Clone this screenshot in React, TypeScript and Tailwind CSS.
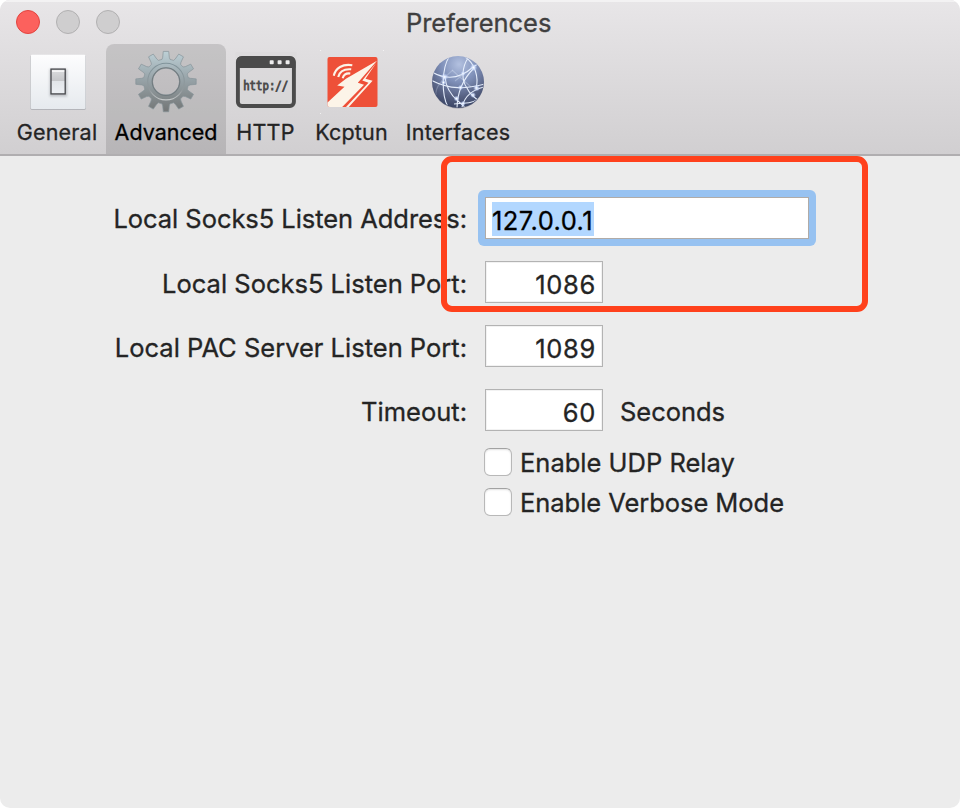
import React from "react";

const gearPath = (() => {
  const teeth = 12;
  const parts: string[] = [];
  const point = (radius: number, angle: number) =>
    `${(32 + radius * Math.sin(angle)).toFixed(2)} ${(32 - radius * Math.cos(angle)).toFixed(2)}`;
  for (let i = 0; i < teeth; i++) {
    const a = (i * 2 * Math.PI) / teeth;
    parts.push(`${i ? "L" : "M"}${point(22.5, a - 0.18)}`);
    parts.push(`L${point(24.5, a - 0.135)}`);
    parts.push(`L${point(30.3, a - 0.09)}`);
    parts.push(`L${point(30.3, a + 0.09)}`);
    parts.push(`L${point(24.5, a + 0.135)}`);
    parts.push(`L${point(22.5, a + 0.18)}`);
    parts.push(`A22.5 22.5 0 0 1 ${point(22.5, a + (2 * Math.PI) / teeth - 0.18)}`);
  }
  return parts.join("") + "Z M45.5 32A13.5 13.5 0 1 0 18.5 32A13.5 13.5 0 1 0 45.5 32Z";
})();

function SwitchIcon() {
  return (
    <svg width="64" height="64" viewBox="0 0 64 64">
      <defs>
        <linearGradient id="plate" x1="0" y1="0" x2="0" y2="1">
          <stop offset="0" stopColor="#fdfdfe" />
          <stop offset="1" stopColor="#e6eaee" />
        </linearGradient>
        <linearGradient id="rocker" x1="0" y1="0" x2="0" y2="1">
          <stop offset="0" stopColor="#dcdddf" />
          <stop offset="0.46" stopColor="#c6c7ca" />
          <stop offset="0.5" stopColor="#e2e5e9" />
          <stop offset="1" stopColor="#edf0f4" />
        </linearGradient>
        <filter id="soft" x="-50%" y="-50%" width="200%" height="200%">
          <feGaussianBlur stdDeviation="1.3" />
        </filter>
      </defs>
      <g transform="translate(0.8 0)">
        <rect x="4.700" y="5" width="55.300" height="54.800" rx="1.500" fill="#a8abb0" />
        <rect x="5" y="4.700" width="54.700" height="54.300" rx="1" fill="url(#plate)" />
        <rect x="23.800" y="19" width="17.500" height="27.500" fill="#777b82" opacity="0.400" filter="url(#soft)" />
        <rect x="25.200" y="19.100" width="14.200" height="24.800" fill="url(#rocker)" stroke="#47484c" strokeWidth="1.300" />
        <rect x="26.200" y="20.200" width="12.200" height="1.800" fill="#f4f4f5" />
      </g>
    </svg>
  );
}

function GearIcon() {
  return (
    <svg width="64" height="64" viewBox="0 0 64 64">
      <defs>
        <linearGradient id="gear" x1="0" y1="0" x2="0" y2="1">
          <stop offset="0" stopColor="#bdd0d6" />
          <stop offset="0.45" stopColor="#98a4a9" />
          <stop offset="1" stopColor="#737676" />
        </linearGradient>
        <linearGradient id="gearRing" x1="0" y1="0" x2="0" y2="1">
          <stop offset="0" stopColor="#81949b" />
          <stop offset="0.75" stopColor="#92999c" />
          <stop offset="1" stopColor="#c6c9ca" />
        </linearGradient>
      </defs>
      <g transform="translate(0 -0.4)">
        <path d={gearPath} fill="url(#gear)" stroke="#87949a" strokeWidth="0.700" strokeLinejoin="round" fillRule="evenodd" />
        <circle cx="32" cy="32" r="18.300" fill="none" stroke="url(#gearRing)" strokeWidth="1.100" />
        <circle cx="32" cy="32" r="13.800" fill="none" stroke="#727b7f" strokeWidth="1.100" />
      </g>
    </svg>
  );
}

function HttpIcon() {
  return (
    <svg width="64" height="64" viewBox="0 0 64 64">
      <rect x="1.500" y="2" width="61" height="60" fill="#d8d7d8" opacity="0.350" />
      <g transform="translate(-0.6 0)">
        <rect x="4.500" y="8" width="56" height="48" rx="4" fill="none" stroke="#4b4b4b" strokeWidth="3.900" />
        <path d="M3 18V12Q3 6.500 8 6.500H57Q62 6.500 62 12V18Z" fill="#4b4b4b" />
        <g fill="#eeeeee">
          <rect x="36.300" y="10.300" width="4" height="4" rx="0.800" />
          <rect x="44.200" y="10.300" width="4" height="4" rx="0.800" />
          <rect x="52.200" y="10.300" width="4" height="4" rx="0.800" />
        </g>
        <text
          x="9.800"
          y="39.500"
          fill="#4b4b4b"
          stroke="#4b4b4b"
          strokeWidth="0.900"
          textLength="45"
          lengthAdjust="spacingAndGlyphs"
          className="font-['DejaVu_Sans_Mono',monospace] text-[13px]"
        >
          http://
        </text>
      </g>
    </svg>
  );
}

function KcptunIcon() {
  return (
    <svg width="64" height="64" viewBox="0 0 64 64">
      <g fill="#f4f3f4">
        <circle cx="0.500" cy="0.500" r="0.600" />
        <circle cx="63.500" cy="0.500" r="0.600" />
        <circle cx="0.500" cy="63.500" r="0.600" />
      </g>
      <rect x="7.500" y="7" width="50" height="50" rx="2" fill="#ee5038" />
      <g fill="none" stroke="#fcf4e8" strokeWidth="2.100">
        <path d="M13.800 25.800C15.500 18 22.500 13.600 32.300 15.200" />
        <path d="M18.200 27C19.500 21.700 24 18.700 31.200 19.300" />
        <path d="M22.700 28.300C23.500 25 26 23 30.300 23.500" />
      </g>
      <path d="M57 10.800L26.300 28.500L17.200 35.500L24.500 36.700L7.500 52.500V55Q7.500 57 9.500 57H22.200L44 34.800L37.800 32.700Z" fill="#fcf4e8" />
      <path d="M56.300 12.800L45.500 28.800L52.600 30.800L28.800 57H26L48.500 32.700L42.300 30.600Z" fill="#fcf4e8" />
    </svg>
  );
}

function GlobeIcon() {
  return (
    <svg width="64" height="64" viewBox="0 0 64 64">
      <defs>
        <radialGradient id="globe" cx="0.520" cy="0.160" r="0.850">
          <stop offset="0" stopColor="#b3c1e0" />
          <stop offset="0.400" stopColor="#7f90b9" />
          <stop offset="0.750" stopColor="#555f80" />
          <stop offset="1" stopColor="#394464" />
        </radialGradient>
        <radialGradient id="glow">
          <stop offset="0" stopColor="#ffffff" />
          <stop offset="0.350" stopColor="#dce8ff" stopOpacity="0.850" />
          <stop offset="1" stopColor="#b6cbff" stopOpacity="0" />
        </radialGradient>
        <clipPath id="globeClip">
          <circle cx="32" cy="32" r="25.500" />
        </clipPath>
      </defs>
      <ellipse cx="32" cy="33" rx="25.700" ry="25.700" fill="#8c8c97" opacity="0.500" />
      <circle cx="32" cy="32" r="26" fill="url(#globe)" />
      <g clipPath="url(#globeClip)" fill="none" stroke="#e5edfb" strokeWidth="1.100">
        <path d="M23 7C16 18 15 44 22 57" />
        <path d="M6 22C20 30 34 29 47 17L55 12" />
        <path d="M5 30C24 40 40 39 59 34" />
        <path d="M42 8C36 17 35 30 41 38C44 45 50 49 55 52" />
        <path d="M19 27C20 38 26 46 32 51L41 59" />
        <path d="M48 18C38 28 31 42 31 59" />
        <path d="M39 7C49 13 53 28 50 38" />
        <path d="M36 57C39 45 47 40 58 37" />
        <path d="M28 54C37 53 48 54 54 47" />
        <path d="M10 45C9 38 16 29 27 20" strokeOpacity="0.250" />
        <path d="M26 20L45 37M29 31L39 23" strokeOpacity="0.300" />
      </g>
      <g fill="url(#glow)">
        <circle cx="18.500" cy="27" r="3.800" />
        <circle cx="17.500" cy="32.500" r="2.700" />
        <circle cx="47.500" cy="17.500" r="3.800" />
        <circle cx="37" cy="23.500" r="2.500" />
        <circle cx="34.500" cy="37.500" r="2.800" />
        <circle cx="50.500" cy="38" r="3.500" />
        <circle cx="47" cy="45" r="3" />
        <circle cx="30.500" cy="48.500" r="3" />
        <circle cx="37" cy="53.500" r="2.700" />
      </g>
    </svg>
  );
}

const tabs = [
  { label: "General", icon: <SwitchIcon />, width: "w-[98px]", tracking: "tracking-[0.2px]" },
  { label: "Advanced", icon: <GearIcon />, width: "w-[120px]", tracking: "tracking-[0px]", active: true },
  { label: "HTTP", icon: <HttpIcon />, width: "w-[79px]", tracking: "tracking-[0.2px]" },
  { label: "Kcptun", icon: <KcptunIcon />, width: "w-[93px]", tracking: "tracking-[0.2px]" },
  { label: "Interfaces", icon: <GlobeIcon />, width: "w-[120px]", tracking: "tracking-[0.25px]" },
];

function Row({ label, tracking, top, children }: { label: string; tracking: string; top: string; children: React.ReactNode }) {
  return (
    <div className="flex h-16 items-center">
      <label className={`w-[467px] shrink-0 text-right whitespace-nowrap ${top} ${tracking}`}>{label}</label>
      {children}
    </div>
  );
}

function NumberField({ value }: { value: string }) {
  return (
    <div className="ml-[18px] flex h-[42px] w-[118px] items-center justify-end border border-[#b3b3b3] bg-white pt-[5px] pr-[6px] tracking-[0.7px] shadow-[inset_0_0_0_1px_#f2f2f2]">
      {value}
    </div>
  );
}

function Checkbox({ label, tracking }: { label: string; tracking: string }) {
  return (
    <div className="ml-[484px] flex h-10 items-center gap-2">
      <span className="h-7 w-7 shrink-0 rounded-[6px] border border-[#b8b8b8] border-t-[#a2a2a2] bg-white shadow-[inset_0_1px_2px_#e2e2e2]" />
      <span className={`pt-[2px] whitespace-nowrap ${tracking}`}>{label}</span>
    </div>
  );
}

export default function App() {
  return (
    <div className="h-[808px] w-[960px] bg-white font-[Inter,sans-serif] text-[25.5px] leading-8 text-[#242424] [-webkit-text-stroke-width:0.3px]">
      <div className="relative h-full overflow-hidden rounded-[10px] bg-[#ececec]">
        <header className="h-[156px] border-b-2 border-[#b0aeb0] bg-linear-to-b from-[#e8e6e8] to-[#d1cfd1] shadow-[inset_0_2px_0_#f3f2f3]">
          <div className="flex h-11 items-center">
            <div className="flex w-[120px] gap-4 pl-4">
              <span className="h-6 w-6 rounded-full border border-[#e2443f] bg-[#fc615d]" />
              <span className="h-6 w-6 rounded-full border border-[#b1b0b1] bg-[#cfcecf]" />
              <span className="h-6 w-6 rounded-full border border-[#b1b0b1] bg-[#cfcecf]" />
            </div>
            <h1 className="ml-[286px] pt-[2px] tracking-[-0.050px] whitespace-nowrap text-[#403f40]">Preferences</h1>
          </div>
          <nav className="flex h-[110px] pl-2">
            {tabs.map((tab) => (
              <div
                key={tab.label}
                className={`flex shrink-0 flex-col items-center rounded-t-[8px] pt-[6px] ${tab.width} ${tab.active ? "bg-black/12 text-black" : ""}`}
              >
                {tab.icon}
                <span className={`mt-[2px] text-[21.5px] leading-8 whitespace-nowrap ${tab.tracking}`}>{tab.label}</span>
              </div>
            ))}
          </nav>
        </header>
        <main className="pt-[30px]">
          <Row label="Local Socks5 Listen Address:" top="pt-px" tracking="tracking-[-0.05px]">
            <div className="ml-[11px] h-14 w-[338px] rounded-[6px] bg-[#97c2f1] p-[7px]">
              <div className="flex h-[42px] items-center border border-[#b0aba7] bg-white pl-[6px]">
                <span className="mt-[2px] h-[34px] w-[102px] bg-[#b2d7ff] pt-[3px] tracking-[0.450px] whitespace-nowrap text-black">127.0.0.1</span>
              </div>
            </div>
          </Row>
          <Row label="Local Socks5 Listen Port:" top="pt-[3px]" tracking="tracking-[0px]">
            <NumberField value="1086" />
          </Row>
          <Row label="Local PAC Server Listen Port:" top="pt-[3px]" tracking="tracking-[0px]">
            <NumberField value="1089" />
          </Row>
          <Row label="Timeout:" top="pt-[3px]" tracking="tracking-[0px]">
            <NumberField value="60" />
            <span className="ml-[17px] pt-[3px] tracking-[-0.050px]">Seconds</span>
          </Row>
          <Checkbox label="Enable UDP Relay" tracking="tracking-[0px]" />
          <Checkbox label="Enable Verbose Mode" tracking="tracking-[-0.05px]" />
        </main>
        <div className="pointer-events-none absolute top-[156px] left-[441px] h-[156px] w-[427px] rounded-[11px] border-6 border-[#ff411c]" />
      </div>
    </div>
  );
}
